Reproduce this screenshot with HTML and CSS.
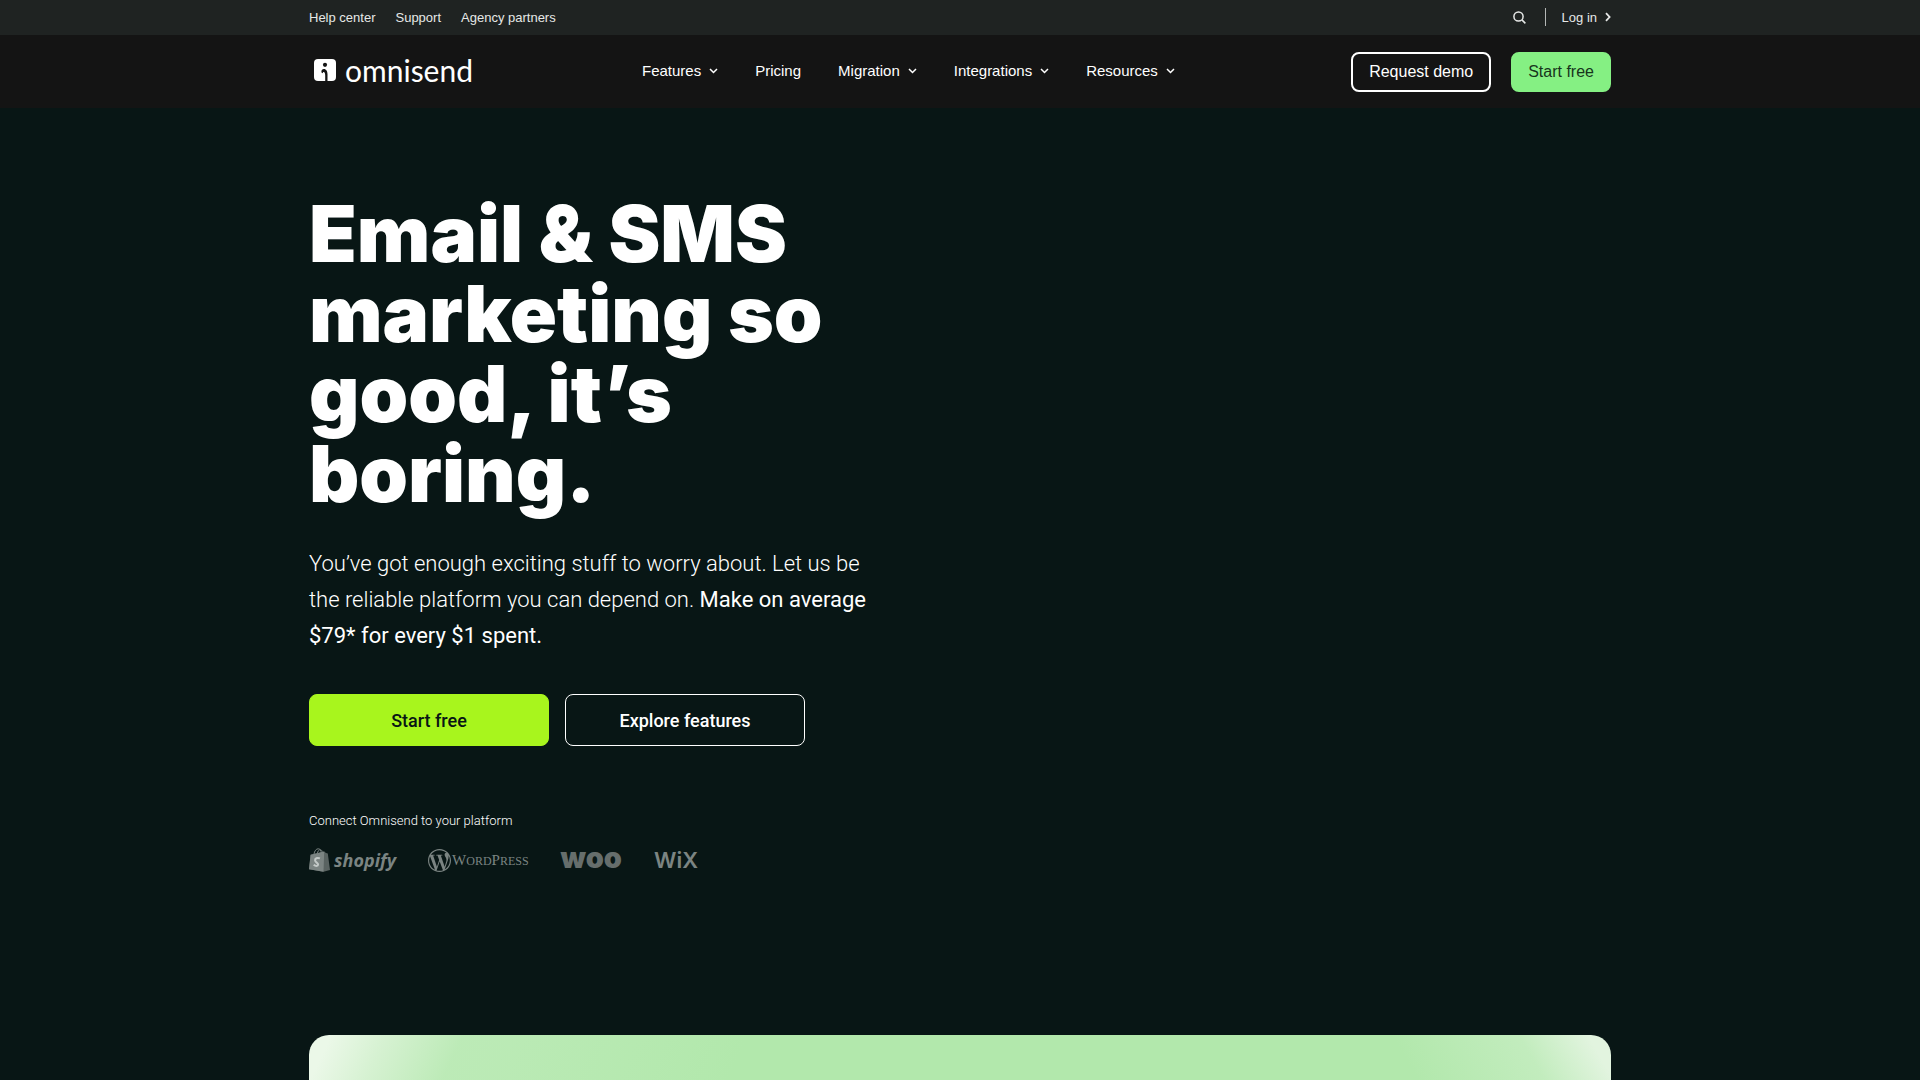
FILE: index.html
```html
<!DOCTYPE html>
<html lang="en">
<head>
  <meta charset="UTF-8" />
  <meta name="viewport" content="width=device-width, initial-scale=1.0" />
  <title>Omnisend: Email &amp; SMS marketing</title>
  <link rel="stylesheet" href="styles.css">
</head>
<body>
  <div class="topbar">
    <div class="container topbar-inner">
      <nav class="topbar-links">
        <a href="#">Help center</a>
        <a href="#">Support</a>
        <a href="#">Agency partners</a>
      </nav>
      <div class="topbar-right">
        <button class="search-button" type="button" aria-label="Search">
          <svg width="13" height="13" viewBox="0 0 13 13" fill="none" stroke="currentColor" stroke-width="1.5">
            <circle cx="5.5" cy="5.5" r="4.6" />
            <path d="M8.9 8.9l3.5 3.5" />
          </svg>
        </button>
        <a class="login" href="#">Log in
          <svg width="6" height="10" viewBox="0 0 6 10" fill="none" stroke="currentColor" stroke-width="1.8">
            <path d="M1 1.2L4.6 5 1 8.8" />
          </svg>
        </a>
      </div>
    </div>
  </div>

  <header class="header">
    <div class="container header-inner">
      <a class="logo" href="#">
        <svg width="22" height="22" viewBox="0 0 22 22">
          <rect width="22" height="22" rx="4" fill="#fff" />
          <circle cx="11" cy="5.8" r="2.1" fill="#141414" />
          <path d="M7.4 12.6c0-1.4 1-2.5 2.4-2.5 2.5 0 3.7 2.4 3.7 5.2V22h-2.3v-5.5c0-2.2-.5-3.6-1.6-3.6-.6 0-.8.6-.8 1.3-.9 0-1.400-.7-1.400-1.600z" fill="#141414" />
        </svg>
        <span>omnisend</span>
      </a>

      <nav class="menu">
        <a href="#">Features <svg class="chevron" viewBox="0 0 9 6"><path d="M1 1l3.5 3.5L8 1" /></svg></a>
        <a href="#">Pricing</a>
        <a href="#">Migration <svg class="chevron" viewBox="0 0 9 6"><path d="M1 1l3.5 3.5L8 1" /></svg></a>
        <a href="#">Integrations <svg class="chevron" viewBox="0 0 9 6"><path d="M1 1l3.5 3.5L8 1" /></svg></a>
        <a href="#">Resources <svg class="chevron" viewBox="0 0 9 6"><path d="M1 1l3.5 3.5L8 1" /></svg></a>
      </nav>

      <div class="header-buttons">
        <button class="btn-demo" type="button">Request demo</button>
        <button class="btn-start" type="button">Start free</button>
      </div>
    </div>
  </header>

  <main class="container">
    <section class="hero">
      <h1>Email &amp; SMS<br>marketing so<br>good, it’s<br>boring.</h1>
      <p class="lead">You’ve got enough exciting stuff to worry about. Let us be the reliable platform you can depend on. <strong>Make on average $79* for every $1 spent.</strong></p>
      <div class="hero-buttons">
        <button class="btn-primary" type="button">Start free</button>
        <button class="btn-outline" type="button">Explore features</button>
      </div>
      <p class="connect">Connect Omnisend to your platform</p>
      <div class="platforms">
        <div class="platform shopify">
          <svg width="21" height="24" viewBox="0 0 21 24">
            <path d="M1.6 6.8L15.2 3.6 17 5l1.800.5L21 22l-6.5 1.8L0 21.2z" fill="#596361" />
            <path d="M1.6 6.8L15.2 3.6l-.7 20.2L0 21.2z" fill="#7b8482" />
            <path d="M4.9 6.4C5.4 3 7.2.8 9.2.8s3 2 3.1 4.2M8.3 5.7C8.600 3.300 10 1.500 11.400 1.700c1.300.2 1.900 1.500 2 2.600" fill="none" stroke="#7b8482" stroke-width="1" />
            <path d="M10.9 10.4c-2.600-1.200-5.100 0-4.800 2.200.3 2 3.200 2.100 3 4.100-.2 1.800-2.700 1.500-4.400.1" fill="none" stroke="#c3c9c7" stroke-width="2" />
          </svg>
          <span>shopify</span>
        </div>
        <div class="platform wordpress">
          <svg width="23" height="23" viewBox="0 0 24 24" fill="currentColor">
            <path d="M21.469 6.825c.84 1.537 1.318 3.3 1.318 5.175 0 3.979-2.156 7.456-5.363 9.325l3.295-9.527c.615-1.54.82-2.771.82-3.864 0-.405-.026-.78-.07-1.11m-7.981.105c.647-.03 1.232-.105 1.232-.105.582-.075.514-.93-.067-.899 0 0-1.755.135-2.88.135-1.064 0-2.85-.15-2.85-.15-.585-.03-.661.855-.075.885 0 0 .54.061 1.125.09l1.68 4.605-2.37 7.08L5.354 6.9c.649-.03 1.234-.1 1.234-.1.585-.075.516-.93-.065-.896 0 0-1.746.138-2.874.138-.2 0-.438-.008-.69-.015C4.911 3.15 8.235 1.215 12 1.215c2.809 0 5.365 1.072 7.286 2.833-.046-.003-.091-.009-.141-.009-1.06 0-1.812.923-1.812 1.914 0 .89.513 1.643 1.06 2.531.411.72.89 1.643.89 2.977 0 .915-.354 1.994-.821 3.479l-1.075 3.585-3.9-11.61.001.014zM12 22.784c-1.059 0-2.081-.153-3.048-.437l3.237-9.406 3.315 9.087c.024.053.05.101.078.149-1.12.393-2.325.609-3.582.609M1.211 12c0-1.564.336-3.05.935-4.39L7.29 21.709C3.694 19.96 1.212 16.271 1.211 12M12 0C5.385 0 0 5.385 0 12s5.385 12 12 12 12-5.385 12-12S18.615 0 12 0" />
          </svg>
          <span>W<small>ORD</small>P<small>RESS</small></span>
        </div>
        <div class="platform woo">woo</div>
        <div class="platform wix">WiX</div>
      </div>
    </section>
  </main>

  <div class="container panel-wrap">
    <div class="panel"></div>
  </div>
</body>
</html>
```
FILE: styles.css
```css
* {
  box-sizing: border-box;
}

body {
  margin: 0;
  min-height: 100vh;
  display: flex;
  flex-direction: column;
  background-color: #081615;
  color: #fff;
  font-family: Roboto, sans-serif;
}

a {
  color: inherit;
  text-decoration: none;
}

button {
  cursor: pointer;
}

svg {
  flex-shrink: 0;
}

.container {
  width: 100%;
  max-width: 1302px;
  margin: 0 auto;
}

/* Top bar */
.topbar {
  background-color: #1f2322;
  color: #e6e8e7;
  font-family: "Liberation Sans", sans-serif;
  font-size: 13px;
  line-height: 15px;
}

.topbar-inner {
  display: flex;
  justify-content: space-between;
  align-items: center;
  height: 35px;
  padding-bottom: 1px;
}

.topbar-links {
  display: flex;
  gap: 20px;
}

.topbar-right {
  display: flex;
  align-items: center;
  gap: 19px;
}

.search-button {
  display: flex;
  padding: 0;
  border: 0;
  background: none;
  color: inherit;
}

.login {
  display: flex;
  align-items: center;
  gap: 8px;
  height: 18px;
  padding-left: 16px;
  border-left: 1px solid #b4b7b6;
}

/* Header */
.header {
  background-color: #141414;
  font-family: "Liberation Sans", sans-serif;
}

.header-inner {
  display: flex;
  align-items: center;
  height: 73px;
}

.logo {
  display: flex;
  flex: 0 0 333px;
  align-items: center;
  gap: 9px;
  padding: 0 0 4px 5px;
  font-family: Lato, sans-serif;
  font-size: 30px;
  line-height: 34px;
}

.menu {
  display: flex;
  gap: 37px;
  padding-bottom: 2px;
  font-size: 15px;
}

.menu a {
  display: flex;
  align-items: center;
  gap: 8px;
}

.chevron {
  width: 9px;
  height: 6px;
  fill: none;
  stroke: #fff;
  stroke-width: 1.5;
}

.header-buttons {
  display: flex;
  gap: 20px;
  margin-left: auto;
}

.btn-demo,
.btn-start {
  height: 40px;
  padding: 0 16px;
  border: 2px solid #fff;
  border-radius: 8px;
  background: none;
  color: #fff;
  font-family: inherit;
  font-size: 16px;
}

.btn-start {
  padding: 0 15px;
  border-color: #85f083;
  background-color: #85f083;
  color: #17351c;
}

/* Hero */
.hero {
  max-width: 560px;
  padding: 86px 0 163px;
}

h1 {
  margin: 0 0 32px;
  font-family: Inter, sans-serif;
  font-size: 78px;
  font-weight: 900;
  line-height: 80px;
}

.lead {
  margin: 0 0 40px;
  font-size: 22px;
  font-weight: 300;
  line-height: 36px;
}

.lead strong {
  font-weight: 400;
}

.hero-buttons {
  display: flex;
  gap: 16px;
}

.btn-primary,
.btn-outline {
  width: 240px;
  height: 52px;
  border: 1px solid #fff;
  border-radius: 8px;
  background: none;
  color: #fff;
  font-family: inherit;
  font-size: 18px;
  font-weight: 500;
}

.btn-primary {
  border-color: #a8f51d;
  background-color: #a8f51d;
  color: #081615;
}

.connect {
  margin: 66px 0 18px;
  font-size: 13px;
  font-weight: 300;
  line-height: 18px;
}

.platforms {
  display: flex;
  align-items: center;
  gap: 32px;
  height: 24px;
  color: #7b8482;
}

.platform {
  display: flex;
  align-items: center;
  line-height: 24px;
}

.shopify {
  gap: 4px;
  font-family: "Open Sans", sans-serif;
  font-size: 18px;
  font-style: italic;
  font-weight: 700;
}

.wordpress {
  gap: 1px;
  font-family: "Liberation Serif", serif;
  font-size: 15px;
}

.wordpress small {
  font-size: 12px;
}

.woo {
  padding-bottom: 4px;
  color: #666e6c;
  font-family: Inter, sans-serif;
  font-size: 29px;
  font-weight: 900;
}

.wix {
  font-family: Inter, sans-serif;
  font-size: 22px;
  font-weight: 600;
}

/* Panel below the hero */
.panel-wrap {
  display: flex;
  flex: 1;
}

.panel {
  flex: 1;
  min-height: 45px;
  border-radius: 20px 20px 0 0;
  background:
    linear-gradient(115deg, #ebf8e8 20px, rgba(220, 243, 216, 0.85) 70px, rgba(195, 236, 190, 0.6) 140px, rgba(178, 232, 172, 0) 400px),
    linear-gradient(240deg, #e2f4df 20px, rgba(205, 239, 201, 0.6) 80px, rgba(178, 232, 172, 0) 190px),
    #b2e8ac;
}
```
